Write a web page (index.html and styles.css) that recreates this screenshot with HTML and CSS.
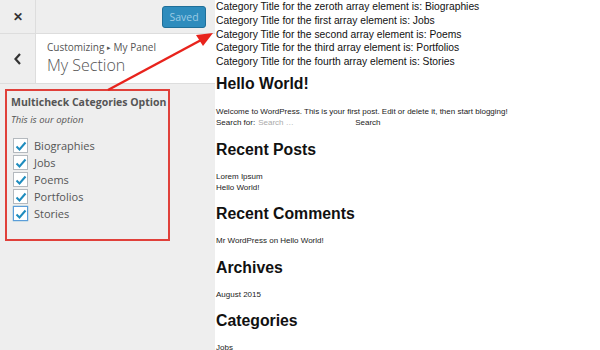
FILE: index.html
```html
<!DOCTYPE html>
<html lang="en">
<head>
  <meta charset="UTF-8">
  <title>Multicheck Categories Option</title>
  <link rel="stylesheet" href="styles.css">
</head>
<body>
  <div class="page">
    <div class="sidebar">
      <div class="topbar">
        <div class="close">&#x2715;</div>
        <div class="saved">Saved</div>
      </div>
      <div class="section-head">
        <div class="back">
          <svg width="10" height="14" viewBox="0 0 10 14"><path d="M7 2 L2.5 7 L7 12" fill="none" stroke="#333" stroke-width="2.2"/></svg>
        </div>
        <div class="titles">
          <div class="crumb">Customizing <span class="tri">&#x25B8;</span> My Panel</div>
          <div class="title">My Section</div>
        </div>
      </div>

      <div class="control">
        <div class="label">Multicheck Categories Option</div>
        <div class="desc">This is our option</div>
        <ul class="checks">
          <li><span class="box"><svg width="12" height="12" viewBox="0 0 12 12"><path d="M1.5 6.5 L4.5 9.5 L10.5 2.5" fill="none" stroke="#1e8cbe" stroke-width="2"/></svg></span>Biographies</li>
          <li><span class="box"><svg width="12" height="12" viewBox="0 0 12 12"><path d="M1.5 6.5 L4.5 9.5 L10.5 2.5" fill="none" stroke="#1e8cbe" stroke-width="2"/></svg></span>Jobs</li>
          <li><span class="box"><svg width="12" height="12" viewBox="0 0 12 12"><path d="M1.5 6.5 L4.5 9.5 L10.5 2.5" fill="none" stroke="#1e8cbe" stroke-width="2"/></svg></span>Poems</li>
          <li><span class="box"><svg width="12" height="12" viewBox="0 0 12 12"><path d="M1.5 6.5 L4.5 9.5 L10.5 2.5" fill="none" stroke="#1e8cbe" stroke-width="2"/></svg></span>Portfolios</li>
          <li><span class="box focus"><svg width="12" height="12" viewBox="0 0 12 12"><path d="M1.5 6.5 L4.5 9.5 L10.5 2.5" fill="none" stroke="#1e8cbe" stroke-width="2"/></svg></span>Stories</li>
        </ul>
      </div>
    </div>

    <div class="preview">
      <div class="cats">
        <div>Category Title for the zeroth array element is: Biographies</div>
        <div>Category Title for the first array element is: Jobs</div>
        <div>Category Title for the second array element is: Poems</div>
        <div>Category Title for the third array element is: Portfolios</div>
        <div>Category Title for the fourth array element is: Stories</div>
      </div>

      <h2>Hello World!</h2>
      <p class="small intro">Welcome to WordPress. This is your first post. Edit or delete it, then start blogging!</p>
      <div class="search small">
        <span>Search for:</span>
        <span class="field">Search &hellip;</span>
        <span>Search</span>
      </div>

      <h2 class="after-search">Recent Posts</h2>
      <p class="small">Lorem Ipsum<br>Hello World!</p>

      <h2>Recent Comments</h2>
      <p class="small">Mr WordPress on Hello World!</p>

      <h2>Archives</h2>
      <p class="small">August 2015</p>

      <h2>Categories</h2>
      <p class="small">Jobs</p>
    </div>
  </div>

  <!-- annotation arrow drawn over the screenshot -->
  <svg class="arrow" width="600" height="350" viewBox="0 0 600 350">
    <line x1="108" y1="90" x2="203" y2="39" stroke="#e8231c" stroke-width="2.5"/>
    <polygon points="213,33 196,35 203,46" fill="#e8231c"/>
  </svg>
</body>
</html>
```

FILE: styles.css
```css
body {
  margin: 0;
  font-family: "Liberation Sans", Arial, sans-serif;
  background: #fff;
  overflow: hidden;
}

.page {
  display: flex;
  height: 350px;
}

.sidebar {
  width: 215px;
  flex: none;
  background: #eeeeee;
  font-family: "Open Sans", sans-serif;
  color: #555;
}

.topbar {
  height: 33px;
  display: flex;
  justify-content: space-between;
  align-items: center;
  border-bottom: 1px solid #ddd;
}

.close {
  width: 35px;
  height: 33px;
  border-right: 1px solid #ddd;
  display: flex;
  align-items: center;
  justify-content: center;
  font-size: 12px;
  font-weight: bold;
  color: #333;
}

.saved {
  margin-right: 9px;
  width: 42px;
  height: 20px;
  background: #2e8cbd;
  border: 1px solid #1f6f99;
  border-radius: 3px;
  color: #9ccbe4;
  font-size: 10.5px;
  display: flex;
  align-items: center;
  justify-content: center;
}

.section-head {
  display: flex;
  height: 49px;
  border-bottom: 1px solid #ddd;
}

.back {
  width: 35px;
  border-right: 1px solid #ddd;
  display: flex;
  align-items: center;
  justify-content: center;
}

.titles {
  flex: 1;
  background: #fff;
  padding: 7px 0 0 11px;
}

.crumb {
  font-size: 10px;
  line-height: 13px;
  color: #555;
}

.tri {
  font-size: 7px;
  vertical-align: 1px;
}

.title {
  font-size: 16px;
  line-height: 22px;
  font-weight: 300;
  color: #555;
}

.control {
  margin: 5px 45px 0 5px;
  height: 145px;
  border: 2px solid #e0403a;
  padding: 3px 0 0 4px;
}

.label {
  font-size: 10.5px;
  font-weight: bold;
  line-height: 16px;
}

.desc {
  font-size: 9.5px;
  font-style: italic;
  line-height: 14px;
  margin-top: 3px;
}

.checks {
  list-style: none;
  margin: 10px 0 0 0;
  padding: 0;
}

.checks li {
  display: flex;
  align-items: center;
  height: 17px;
  font-size: 11px;
  color: #555;
}

.box {
  width: 13px;
  height: 13px;
  margin: 0 6px 0 2px;
  background: #fff;
  border: 1px solid #b4b9be;
  display: flex;
  align-items: center;
  justify-content: center;
}

.box.focus {
  border-color: #5b9dd9;
  box-shadow: 0 0 1px #1e8cbe;
}

.preview {
  flex: 1;
  padding-left: 1px;
  color: #111;
}

.cats {
  font-size: 10.3px;
  line-height: 13.8px;
}

h2 {
  font-size: 15.8px;
  margin: 11px 0 0 0;
  line-height: 20px;
}

.cats + h2 {
  margin-top: 5px;
}

h2.after-search {
  margin-top: 12px;
}

.small {
  font-size: 8px;
  line-height: 10.5px;
  color: #222;
  margin: 12px 0 0 0;
}

.small.intro {
  margin-top: 13px;
}

p.small + .search {
  margin-top: 0;
  line-height: 11px;
}

.search {
  display: flex;
}

.field {
  width: 97px;
  margin-left: 3px;
  color: #aaa;
}

.arrow {
  position: absolute;
  left: 0;
  top: 0;
  pointer-events: none;
}
```
